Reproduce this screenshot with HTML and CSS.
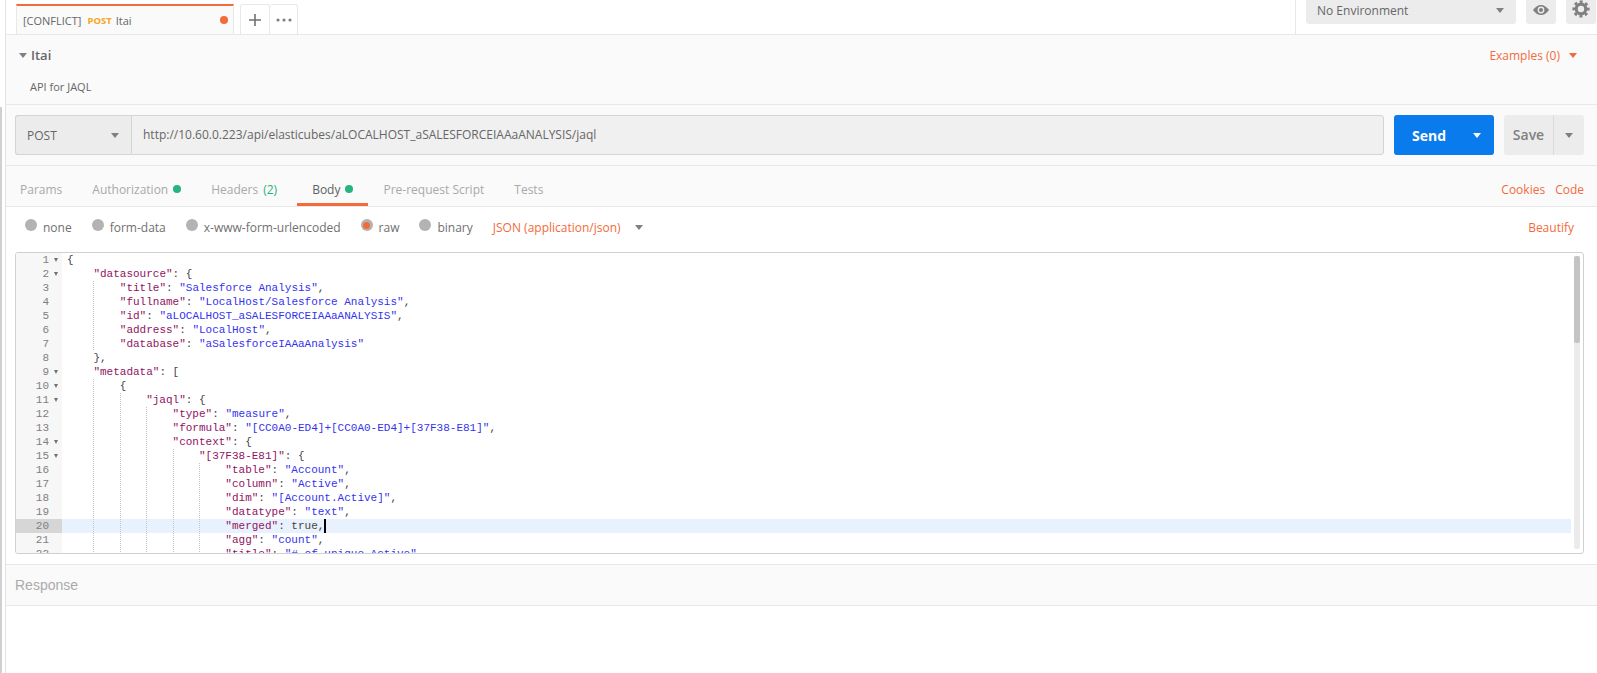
FILE: index.html
```html
<!DOCTYPE html>
<html>

<head>
    <title>Postman - Itai</title>
    <meta name="viewport" content="width=device-width, initial-scale=1" />
    <link rel="stylesheet" href="styles.css">
</head>

<body>
    <div class="rail">
        <div class="rail_top"></div>
        <div class="rail_bar"></div>
    </div>
    <div class="main">
        <div class="topbar">
            <div class="tab">
                <span class="tab_conflict">[CONFLICT]</span>
                <span class="tab_method">POST</span>
                <span class="tab_name">Itai</span>
                <span class="tab_dot"></span>
            </div>
            <div class="tab_btn tab_plus">
                <svg width="14" height="14" viewBox="0 0 14 14"><path d="M7 1v12M1 7h12" stroke="#707070" stroke-width="1.6" fill="none" /></svg>
            </div>
            <div class="tab_btn tab_more">
                <svg width="16" height="4" viewBox="0 0 16 4"><circle cx="2" cy="2" r="1.6" fill="#808080" /><circle cx="8" cy="2" r="1.6" fill="#808080" /><circle cx="14" cy="2" r="1.6" fill="#808080" /></svg>
            </div>
            <div class="env">
                <div class="env_select">
                    <span>No Environment</span>
                    <span class="caret"></span>
                </div>
                <div class="env_btn">
                    <svg width="16" height="10" viewBox="0 0 16 10"><path d="M0 5C2 2 5 0 8 0s6 2 8 5c-2 3-5 5-8 5S2 8 0 5z" fill="#808080" /><circle cx="8" cy="5" r="3.4" fill="#ececec" /><circle cx="8" cy="5" r="2.1" fill="#808080" /></svg>
                </div>
                <div class="env_btn">
                    <svg width="18" height="18" viewBox="0 0 18 18"><circle cx="9" cy="9" r="4.8" fill="none" stroke="#808080" stroke-width="3.2" /><circle cx="9" cy="9" r="7.2" fill="none" stroke="#808080" stroke-width="2.8" stroke-dasharray="2.9 2.75" stroke-dashoffset="1.45" /></svg>
                </div>
            </div>
        </div>

        <div class="info">
            <div class="info_row">
                <span class="caret info_caret"></span>
                <span class="info_name">Itai</span>
                <span class="examples">Examples (0)</span>
                <span class="caret caret_orange"></span>
            </div>
            <div class="info_desc">API for JAQL</div>
        </div>

        <div class="urlrow">
            <div class="method">
                <span>POST</span>
                <span class="caret"></span>
            </div>
            <div class="url">http://10.60.0.223/api/elasticubes/aLOCALHOST_aSALESFORCEIAAaANALYSIS/jaql</div>
            <div class="send">
                <span class="send_label">Send</span>
                <span class="caret caret_white"></span>
            </div>
            <div class="save">
                <span class="save_label">Save</span>
                <span class="save_arrow"><span class="caret"></span></span>
            </div>
        </div>

        <div class="reqtabs">
            <span class="reqtab">Params</span>
            <span class="reqtab">Authorization<span class="dot"></span></span>
            <span class="reqtab tab_headers">Headers<span class="count">(2)</span></span>
            <span class="reqtab active">Body<span class="dot"></span></span>
            <span class="reqtab">Pre-request Script</span>
            <span class="reqtab">Tests</span>
            <span class="reqlinks">
                <span>Cookies</span>
                <span>Code</span>
            </span>
        </div>

        <div class="bodyopts">
            <span class="opt"><span class="radio"></span>none</span>
            <span class="opt"><span class="radio"></span>form-data</span>
            <span class="opt"><span class="radio"></span>x-www-form-urlencoded</span>
            <span class="opt"><span class="radio on"></span>raw</span>
            <span class="opt"><span class="radio"></span>binary</span>
            <span class="opt_type">JSON (application/json)</span>
            <span class="caret"></span>
            <span class="beautify">Beautify</span>
        </div>

        <div class="editor">
            <div class="lines">
                <div class="ln"><span class="gut">1<i class="fold"></i></span><span class="code">{</span></div>
                <div class="ln"><span class="gut">2<i class="fold"></i></span><span class="code"><u></u><b>"datasource"</b>: {</span></div>
                <div class="ln"><span class="gut">3</span><span class="code"><u></u><u class="g"></u><b>"title"</b>: <em>"Salesforce Analysis"</em>,</span></div>
                <div class="ln"><span class="gut">4</span><span class="code"><u></u><u class="g"></u><b>"fullname"</b>: <em>"LocalHost/Salesforce Analysis"</em>,</span></div>
                <div class="ln"><span class="gut">5</span><span class="code"><u></u><u class="g"></u><b>"id"</b>: <em>"aLOCALHOST_aSALESFORCEIAAaANALYSIS"</em>,</span></div>
                <div class="ln"><span class="gut">6</span><span class="code"><u></u><u class="g"></u><b>"address"</b>: <em>"LocalHost"</em>,</span></div>
                <div class="ln"><span class="gut">7</span><span class="code"><u></u><u class="g"></u><b>"database"</b>: <em>"aSalesforceIAAaAnalysis"</em></span></div>
                <div class="ln"><span class="gut">8</span><span class="code"><u></u>},</span></div>
                <div class="ln"><span class="gut">9<i class="fold"></i></span><span class="code"><u></u><b>"metadata"</b>: [</span></div>
                <div class="ln"><span class="gut">10<i class="fold"></i></span><span class="code"><u></u><u class="g"></u>{</span></div>
                <div class="ln"><span class="gut">11<i class="fold"></i></span><span class="code"><u></u><u class="g"></u><u class="g"></u><b>"jaql"</b>: {</span></div>
                <div class="ln"><span class="gut">12</span><span class="code"><u></u><u class="g"></u><u class="g"></u><u class="g"></u><b>"type"</b>: <em>"measure"</em>,</span></div>
                <div class="ln"><span class="gut">13</span><span class="code"><u></u><u class="g"></u><u class="g"></u><u class="g"></u><b>"formula"</b>: <em>"[CC0A0-ED4]+[CC0A0-ED4]+[37F38-E81]"</em>,</span></div>
                <div class="ln"><span class="gut">14<i class="fold"></i></span><span class="code"><u></u><u class="g"></u><u class="g"></u><u class="g"></u><b>"context"</b>: {</span></div>
                <div class="ln"><span class="gut">15<i class="fold"></i></span><span class="code"><u></u><u class="g"></u><u class="g"></u><u class="g"></u><u class="g"></u><b>"[37F38-E81]"</b>: {</span></div>
                <div class="ln"><span class="gut">16</span><span class="code"><u></u><u class="g"></u><u class="g"></u><u class="g"></u><u class="g"></u><u class="g"></u><b>"table"</b>: <em>"Account"</em>,</span></div>
                <div class="ln"><span class="gut">17</span><span class="code"><u></u><u class="g"></u><u class="g"></u><u class="g"></u><u class="g"></u><u class="g"></u><b>"column"</b>: <em>"Active"</em>,</span></div>
                <div class="ln"><span class="gut">18</span><span class="code"><u></u><u class="g"></u><u class="g"></u><u class="g"></u><u class="g"></u><u class="g"></u><b>"dim"</b>: <em>"[Account.Active]"</em>,</span></div>
                <div class="ln"><span class="gut">19</span><span class="code"><u></u><u class="g"></u><u class="g"></u><u class="g"></u><u class="g"></u><u class="g"></u><b>"datatype"</b>: <em>"text"</em>,</span></div>
                <div class="ln current"><span class="gut">20</span><span class="code"><u></u><u class="g"></u><u class="g"></u><u class="g"></u><u class="g"></u><u class="g"></u><b>"merged"</b>: true,<span class="cursor"></span></span></div>
                <div class="ln"><span class="gut">21</span><span class="code"><u></u><u class="g"></u><u class="g"></u><u class="g"></u><u class="g"></u><u class="g"></u><b>"agg"</b>: <em>"count"</em>,</span></div>
                <div class="ln"><span class="gut">22</span><span class="code"><u></u><u class="g"></u><u class="g"></u><u class="g"></u><u class="g"></u><u class="g"></u><b>"title"</b>: <em>"# of unique Active"</em>,</span></div>
            </div>
            <div class="scroll">
                <div class="scroll_thumb"></div>
            </div>
        </div>

        <div class="response">Response</div>
    </div>
</body>

</html>
```

FILE: styles.css
```css
html {
    font-family: "Open Sans", Arial, Helvetica, sans-serif;
    font-size: 12px;
}

body {
    margin: 0;
    height: 673px;
    overflow: hidden;
    display: flex;
    background-color: white;
    color: #666;
}

.rail {
    width: 5px;
    flex: none;
    border-right: 1px solid #e3e3e3;
}

.rail_top {
    height: 107px;
}

.rail_bar {
    width: 2px;
    height: 566px;
    background-color: #d0d0d0;
}

.main {
    flex: 1;
    min-width: 0;
}

.caret {
    display: inline-block;
    flex: none;
    width: 0;
    height: 0;
    border-left: 4px solid transparent;
    border-right: 4px solid transparent;
    border-top: 5px solid #808080;
}

.caret_orange {
    border-top-color: #f26b3a;
}

.caret_white {
    border-top-color: white;
}

/* top bar */
.topbar {
    height: 34px;
    display: flex;
    border-bottom: 1px solid #e8e8e8;
    padding-left: 10px;
}

.tab {
    width: 205px;
    height: 28px;
    margin-top: 4px;
    margin-bottom: -1px;
    padding: 0 5px 0 6px;
    display: flex;
    align-items: center;
    background-color: #fafafa;
    border-top: 2px solid #f26b3a;
    border-left: 1px solid #e8e8e8;
    border-right: 1px solid #e8e8e8;
    font-size: 11px;
}

.tab_method {
    font-size: 9.5px;
    font-weight: 700;
    color: #f5a623;
    margin-left: 6px;
}

.tab_name {
    margin-left: 4px;
}

.tab_dot {
    width: 8px;
    height: 8px;
    border-radius: 50%;
    background-color: #f26b3a;
    margin-left: auto;
}

.tab_btn {
    margin-top: 4px;
    display: flex;
    align-items: center;
    justify-content: center;
    border-top: 1px solid #e8e8e8;
    border-right: 1px solid #e8e8e8;
    border-radius: 3px 3px 0 0;
}

.tab_plus {
    width: 28px;
    margin-left: 6px;
    border-left: 1px solid #e8e8e8;
}

.tab_more {
    width: 27px;
}

.env {
    margin-left: auto;
    display: flex;
    gap: 10px;
    padding-left: 10px;
    padding-right: 1px;
    border-left: 1px solid #e8e8e8;
}

.env_select {
    width: 210px;
    height: 24px;
    box-sizing: border-box;
    padding: 0 12px 4px 11px;
    display: flex;
    align-items: center;
    justify-content: space-between;
    background-color: #ececec;
    border-radius: 0 0 3px 3px;
}

.env_btn {
    width: 30px;
    height: 24px;
    display: flex;
    justify-content: center;
    background-color: #ececec;
    border-radius: 0 0 3px 3px;
}

.env_btn svg {
    margin-top: 5px;
}

.env_btn:last-child svg {
    margin-top: 0;
}

/* request name */
.info {
    height: 69px;
    background-color: #fafafa;
    border-bottom: 1px solid #e8e8e8;
}

.info_row {
    height: 40px;
    display: flex;
    align-items: center;
    padding-left: 13px;
    padding-right: 20px;
}

.info_caret {
    margin-right: 4px;
}

.info_name {
    font-size: 13px;
    font-weight: 600;
}

.examples {
    margin-left: auto;
    margin-right: 9px;
    color: #f26b3a;
}

.info_desc {
    padding-left: 24px;
    padding-top: 2px;
    font-size: 11px;
    line-height: 20px;
}

/* url row */
.urlrow {
    height: 61px;
    box-sizing: border-box;
    padding: 10px 13px 10px 9px;
    display: flex;
    background-color: #fafafa;
    border-bottom: 1px solid #e8e8e8;
}

.method {
    width: 116px;
    box-sizing: border-box;
    padding: 0 12px 0 11px;
    display: flex;
    align-items: center;
    justify-content: space-between;
    background-color: #ececec;
    border: 1px solid #d4d4d4;
    border-right: none;
    border-radius: 3px 0 0 3px;
}

.url {
    width: 1253px;
    box-sizing: border-box;
    padding-left: 11px;
    line-height: 38px;
    background-color: #f0f0f0;
    border: 1px solid #d4d4d4;
    border-radius: 0 3px 3px 0;
    white-space: nowrap;
}

.send {
    width: 100px;
    margin-left: 10px;
    box-sizing: border-box;
    padding: 0 13px 0 18px;
    display: flex;
    align-items: center;
    justify-content: space-between;
    background-color: #097bed;
    color: white;
    border-radius: 3px;
}

.send_label {
    font-size: 14px;
    font-weight: 700;
}

.save {
    width: 80px;
    margin-left: 10px;
    display: flex;
    background-color: #ececec;
    color: #808080;
    border-radius: 3px;
}

.save_label {
    width: 49px;
    font-size: 14px;
    font-weight: 600;
    line-height: 40px;
    text-align: center;
    border-right: 1px solid #dcdcdc;
}

.save_arrow {
    flex: 1;
    display: flex;
    align-items: center;
    justify-content: center;
}

/* request tabs */
.reqtabs {
    height: 40px;
    display: flex;
    padding-right: 13px;
    background-color: #fafafa;
    border-bottom: 1px solid #e8e8e8;
    color: #a9a9a9;
}

.reqtab {
    height: 40px;
    box-sizing: border-box;
    padding: 6px 15px 0;
    display: flex;
    align-items: center;
    white-space: pre;
}

.reqtab:first-child {
    padding-left: 14px;
}

.tab_headers {
    margin-right: 5px;
}

.reqtab.active {
    color: #606060;
    border-bottom: 3px solid #f26b3a;
    padding-top: 9px;
}

.dot {
    width: 8px;
    height: 8px;
    margin-left: 5px;
    border-radius: 50%;
    background-color: #26b47f;
}

.count {
    margin-left: 5px;
    color: #26b47f;
}

.reqlinks {
    margin-left: auto;
    display: flex;
    align-items: center;
    padding-top: 6px;
    gap: 10px;
    color: #f26b3a;
}

/* body options */
.bodyopts {
    height: 45px;
    box-sizing: border-box;
    padding: 0 23px 5px 19px;
    display: flex;
    align-items: center;
    gap: 20px;
}

.opt {
    display: flex;
    align-items: center;
    color: #707070;
}

.radio {
    width: 12px;
    height: 12px;
    margin-right: 6px;
    margin-top: -4px;
    border-radius: 50%;
    background-color: #b3b3b3;
    display: flex;
    align-items: center;
    justify-content: center;
}

.radio.on:after {
    content: "";
    width: 7px;
    height: 7px;
    border-radius: 50%;
    background-color: #f26b3a;
}

.opt_type {
    color: #f26b3a;
}

.bodyopts .caret {
    margin-left: -6px;
}

.beautify {
    margin-left: auto;
    color: #f26b3a;
}

/* editor */
.editor {
    width: 1569px;
    height: 302px;
    margin-left: 9px;
    box-sizing: border-box;
    display: flex;
    border: 1px solid #d0d0d0;
    border-radius: 3px;
    overflow: hidden;
}

.lines {
    width: 1555px;
    flex: none;
    overflow: hidden;
    font-family: "Liberation Mono", "Courier New", monospace;
    font-size: 11px;
    color: #444;
}

.ln {
    height: 14px;
    line-height: 14px;
    display: flex;
    white-space: pre;
}

.gut {
    width: 46px;
    flex: none;
    box-sizing: border-box;
    padding-right: 13px;
    text-align: right;
    background-color: #f7f7f7;
    color: #808080;
    position: relative;
}

.fold {
    position: absolute;
    left: 38px;
    top: 5px;
    border-left: 2.5px solid transparent;
    border-right: 2.5px solid transparent;
    border-top: 4px solid #707070;
}

.code {
    padding-left: 5px;
    display: flex;
}

.code u {
    display: block;
    width: 26.4px;
    height: 14px;
    flex: none;
}

.code u.g {
    background-image: repeating-linear-gradient(to bottom, #c4c4c4 0 1px, transparent 1px 2px);
    background-size: 1px 14px;
    background-repeat: no-repeat;
}

.code b {
    font-weight: normal;
    color: #92125f;
}

.code em {
    font-style: normal;
    color: #3333ee;
}

.current {
    background-color: #e8f2fe;
}

.current .gut {
    background-color: #d6d6d6;
}

.cursor {
    width: 2px;
    height: 14px;
    background-color: black;
}

.scroll {
    width: 6px;
    height: 293px;
    margin: 3px 0 0 3px;
    background-color: #ebebeb;
    border-radius: 2px;
}

.scroll_thumb {
    height: 87px;
    background-color: #c4c4c4;
    border-radius: 2px;
}

/* response */
.response {
    height: 42px;
    margin-top: 10px;
    box-sizing: border-box;
    padding-left: 9px;
    line-height: 40px;
    font-family: "Liberation Sans", Arial, sans-serif;
    font-size: 14px;
    color: #aaa;
    background-color: #fafafa;
    border-top: 1px solid #e8e8e8;
    border-bottom: 1px solid #e8e8e8;
}
```
